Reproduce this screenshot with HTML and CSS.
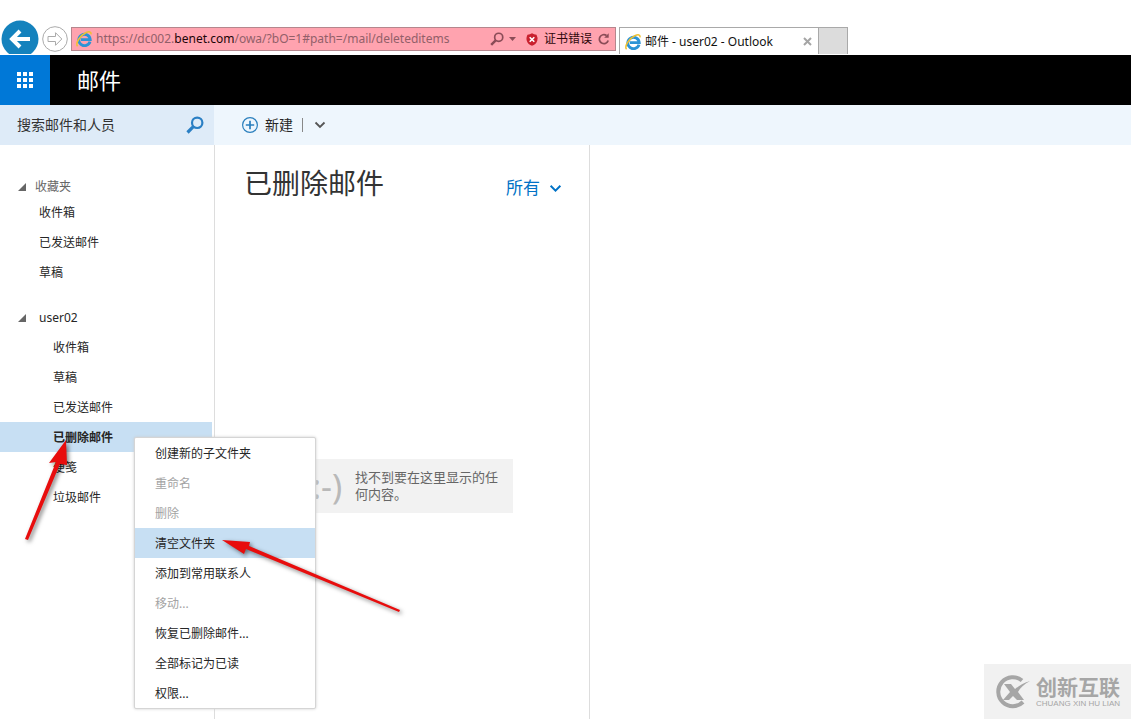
FILE: index.html
```html
<!DOCTYPE html>
<html lang="zh-CN">
<head>
<meta charset="utf-8">
<title>邮件 - user02 - Outlook</title>
<link rel="stylesheet" href="styles.css">
</head>
<body>
<svg class="defs" width="0" height="0" aria-hidden="true">
  <symbol id="ie" viewBox="0 0 16 16">
    <path d="M14 10.600A5.700 5.700 0 1 1 14.200 8.600H5" fill="none" stroke="#2b94d6" stroke-width="2.900"/>
    <path d="M1.600 15.300C-1 12.500 4 4.500 9.800 1.800c3.200-1.500 5.600-1.300 5.200 1.500" fill="none" stroke="#f0c030" stroke-width="1.500"/>
  </symbol>
  <symbol id="lens" viewBox="0 0 18 18">
    <circle cx="11.200" cy="6.800" r="5.200" fill="none" stroke="currentColor" stroke-width="2.200"/>
    <path d="M7.300 10.700 1.500 16.500" stroke="currentColor" stroke-width="3.200"/>
  </symbol>
  <symbol id="chevron" viewBox="0 0 12 8">
    <path d="M1.500 1.500 6 6l4.500-4.500" fill="none" stroke="currentColor" stroke-width="1.800"/>
  </symbol>
</svg>

<header class="browser">
  <button class="back" aria-label="后退"><svg viewBox="0 0 38 38"><circle cx="19" cy="19" r="18.500" fill="#1482bd"/><path d="M29 19H12M19 11l-8 8 8 8" fill="none" stroke="#fff" stroke-width="4"/></svg></button>
  <button class="forward" aria-label="前进"><svg viewBox="0 0 26 26"><circle cx="13" cy="13" r="12.300" fill="#fff" stroke="#aaa"/><path d="M6 10.500h7.500V6.700l6.300 6.300-6.300 6.300v-3.800H6z" fill="#fff" stroke="#aaa"/></svg></button>
  <div class="address">
    <svg class="ie"><use href="#ie"/></svg>
    <div class="url" role="textbox" aria-label="地址">https://dc002.<span class="domain">benet.com</span>/owa/?bO=1#path=/mail/deleteditems</div>
    <button class="find" aria-label="搜索"><svg class="lens-small"><use href="#lens"/></svg><svg class="drop" viewBox="0 0 7 4"><path d="M0 0h7L3.500 4z" fill="#8b4c57"/></svg></button>
    <button class="cert"><svg class="shield" viewBox="0 0 12 13"><path d="M6 .3Q8 1.500 10.500 1.800 12 4.500 11.300 7.500C10.500 10.300 8.500 12 6 12.800 3.500 12 1.500 10.300.7 7.500 0 4.500 1.500 1.800 1.500 1.800Q4 1.500 6 .3z" fill="#c9202e"/><path d="m3.700 4.200 4.600 4.600m0-4.600L3.700 8.800" stroke="#fff" stroke-width="1.600"/></svg>证书错误</button>
    <button class="reload" aria-label="刷新"><svg viewBox="0 0 12 12"><path d="M10.200 7.500A4.500 4.500 0 1 1 8.500 2.500" fill="none" stroke="#8b4c57" stroke-width="1.700"/><path d="M10.700.3v4.500H6.200z" fill="#8b4c57"/></svg></button>
  </div>
  <div class="tab">
    <svg class="ie"><use href="#ie"/></svg>
    <span class="tab-title">邮件 - user02 - Outlook</span>
    <button class="close" aria-label="关闭"><svg viewBox="0 0 9 9"><path d="m1 1 7 7m0-7L1 8" stroke="#a5a5a5" stroke-width="2"/></svg></button>
  </div>
  <button class="new-tab" aria-label="新选项卡"></button>
</header>

<div class="appbar">
  <button class="launcher" aria-label="应用"><svg viewBox="0 0 16 16" fill="#fff"><path d="M0 0h4v4H0zM6 0h4v4H6zM12 0h4v4h-4zM0 6h4v4H0zM6 6h4v4H6zM12 6h4v4h-4zM0 12h4v4H0zM6 12h4v4H6zM12 12h4v4h-4z"/></svg></button>
  <h1 class="app-name">邮件</h1>
</div>

<div class="toolbar">
  <form class="search">
    <input class="search-input" type="text" aria-label="搜索邮件和人员" placeholder="搜索邮件和人员">
    <button class="search-button" type="button" aria-label="搜索"><svg><use href="#lens"/></svg></button>
  </form>
  <div class="commands">
    <button class="create"><svg viewBox="0 0 16 16"><circle cx="8" cy="8" r="7.400" fill="none" stroke="#2a7fbd" stroke-width="1.200"/><path d="M8 3.800v8.400M3.800 8h8.400" stroke="#2a7fbd" stroke-width="1.700"/></svg>新建</button>
    <span class="divider"></span>
    <button class="more" aria-label="更多"><svg><use href="#chevron"/></svg></button>
  </div>
</div>

<main class="panes">
  <nav class="folders">
    <button class="group favorites"><svg viewBox="0 0 8 8"><path d="M8 0v8H0z" fill="#666"/></svg>收藏夹</button>
    <ul class="list">
      <li><a href="#inbox">收件箱</a></li>
      <li><a href="#sent">已发送邮件</a></li>
      <li><a href="#drafts">草稿</a></li>
    </ul>
    <button class="group account"><svg viewBox="0 0 8 8"><path d="M8 0v8H0z" fill="#666"/></svg>user02</button>
    <ul class="list nested">
      <li><a href="#inbox">收件箱</a></li>
      <li><a href="#drafts">草稿</a></li>
      <li><a href="#sent">已发送邮件</a></li>
      <li><a class="current" href="#deleted">已删除邮件</a></li>
      <li><a href="#notes">便笺</a></li>
      <li><a href="#junk">垃圾邮件</a></li>
    </ul>
  </nav>
  <section class="messages">
    <div class="heading">
      <h2>已删除邮件</h2>
      <button class="filter">所有<svg><use href="#chevron"/></svg></button>
    </div>
    <div class="empty"><span class="smile">:-)</span><p>找不到要在这里显示的任何内容。</p></div>
  </section>
  <section class="reading"></section>
</main>

<div class="menu" role="menu">
  <button role="menuitem">创建新的子文件夹</button>
  <button role="menuitem" disabled>重命名</button>
  <button role="menuitem" disabled>删除</button>
  <button role="menuitem" class="active">清空文件夹</button>
  <button role="menuitem">添加到常用联系人</button>
  <button role="menuitem" disabled>移动...</button>
  <button role="menuitem">恢复已删除邮件...</button>
  <button role="menuitem">全部标记为已读</button>
  <button role="menuitem">权限...</button>
</div>

<svg class="arrows" viewBox="0 0 420 640" aria-hidden="true">
  <path d="M66 440 49 463l7-1L25 539l3 1 32-76 7 1z"/>
  <path d="m222 540 22 14 2-5 153 63 1-2-151-64 1-4z"/>
</svg>

<div class="watermark">
  <svg viewBox="0 0 36 34"><path d="M27 5.500A14.500 14.500 0 1 0 28 27" fill="none" stroke="#a6a6a6" stroke-width="4"/><path d="M9 9h7l4 5c4-3 8-6 15-8-6 3-10 7-12 11l6 8h-7l-4-4-4 4H8l7-8z" fill="#a6a6a6"/></svg>
  <div class="brand"><strong>创新互联</strong><span>CHUANG XIN HU LIAN</span></div>
</div>
</body>
</html>
```
FILE: styles.css
```css
* { box-sizing: border-box; }
body {
  margin: 0;
  min-height: 100vh;
  display: flex;
  flex-direction: column;
  position: relative;
  background: #fff;
  color: #262626;
  font: 12px/30px "Noto Sans", "Noto Sans CJK SC", sans-serif;
}
button, input { font: inherit; color: inherit; border: 0; padding: 0; background: none; }
button { display: flex; align-items: center; text-align: left; }
svg { display: block; flex: none; }
h1, h2, p, ul { margin: 0; padding: 0; font-weight: 400; }
ul { list-style: none; }
a { color: inherit; text-decoration: none; }
.defs { position: absolute; }

.browser { display: flex; align-items: flex-start; height: 54px; margin-bottom: 1px; padding: 20px 0 0 1px; overflow: hidden; }
.back svg { width: 38px; height: 38px; }
.forward { margin: 6px 0 0 3px; }
.forward svg { width: 26px; height: 26px; }
.address {
  display: flex;
  align-items: center;
  width: 545px;
  height: 24px;
  margin: 7px 3px 0;
  padding: 0 5px 0 4px;
  background: #ffa3af;
  border: 1px solid #b5868d;
  line-height: 24px;
}
.ie { width: 16px; height: 16px; }
.url, .tab-title { flex: 1; margin-left: 4px; white-space: nowrap; }
.url { color: #925f69; }
.domain { color: #1c0508; }
.find { gap: 5px; color: #8b4c57; }
.lens-small { width: 14px; height: 14px; }
.drop { width: 7px; height: 4px; }
.cert { gap: 6px; margin: 0 6px 0 10px; color: #30080c; }
.shield { width: 12px; height: 13px; }
.reload svg { width: 12px; height: 12px; }
.tab {
  display: flex;
  align-items: center;
  width: 200px;
  height: 28px;
  margin-top: 7px;
  padding: 0 6px 0 5px;
  border: 1px solid #a9a9a9;
  border-bottom: 0;
  color: #111;
}
.close svg { width: 9px; height: 9px; }
.new-tab { width: 29px; height: 28px; margin-top: 7px; background: #dcdcdc; border: 1px solid #a9a9a9; border-left: 0; }

.appbar { display: flex; height: 50px; background: #000; color: #fff; }
.launcher { justify-content: center; width: 50px; background: #0078d7; }
.launcher svg { width: 16px; height: 16px; }
.app-name { margin-left: 27px; font-size: 22px; line-height: 50px; }

.toolbar { display: flex; height: 40px; background: #eef6fd; }
.search { display: flex; width: 214px; padding: 0 10px 0 17px; background: #deebf8; font-size: 14px; }
.search-input { flex: 1; min-width: 0; outline: 0; }
.search-input::placeholder { color: #333; opacity: 1; }
.search-button { color: #2a7fc4; }
.search-button svg { width: 18px; height: 18px; }
.commands { display: flex; align-items: center; padding-left: 28px; font-size: 14px; }
.create { gap: 7px; }
.create svg { width: 16px; height: 16px; }
.divider { width: 1px; height: 14px; margin: 0 11px 0 9px; background: #888; }
.more { color: #555; }
.more svg { width: 12px; height: 8px; }

.panes { flex: 1; display: grid; grid-template-columns: 215px 375px 1fr; }
.folders { padding-top: 29px; border-right: 1px solid #ddd; }
.group { width: 100%; padding: 2px 0 0 18px; }
.group svg { width: 8px; height: 8px; }
.favorites { gap: 9px; height: 24px; color: #666; }
.account { gap: 13px; height: 30px; margin-top: 14px; }
.list a { display: block; height: 30px; padding-left: 39px; }
.nested a { padding-left: 53px; margin-right: 2px; line-height: 32px; }
.nested .current { background: #c7dff3; font-weight: 700; }
.messages { border-right: 1px solid #ddd; padding: 13px 27px 0 29px; }
.heading { display: flex; justify-content: space-between; align-items: center; height: 50px; }
.heading h2 { font-size: 28px; line-height: 50px; color: #333; }
.filter { gap: 9px; margin-top: 10px; color: #0072c6; font-size: 17px; }
.filter svg { width: 13px; height: 9px; }
.empty { display: flex; align-items: center; height: 54px; margin: 251px 49px 0 20px; padding-left: 48px; background: #f2f2f2; color: #666; }
.smile { flex: none; width: 43px; color: #b9b9b9; font-size: 34px; line-height: 44px; }
.empty p { width: 150px; font-size: 13px; line-height: 17px; }

.menu { position: absolute; left: 134px; top: 437px; width: 182px; background: #fff; border: 1px solid #d5d5d5; border-radius: 2px; box-shadow: 0 0 3px #ccc; }
.menu button { width: 100%; height: 30px; padding: 2px 0 0 20px; }
.menu button:disabled { color: #a3a3a3; }
.menu .active { background: #c7dff3; }

.arrows { position: absolute; left: 0; top: 0; width: 420px; height: 640px; pointer-events: none; fill: #e80d0d; filter: drop-shadow(2px 2px 2px rgba(0, 0, 0, .5)); }

.watermark { position: absolute; right: 0; bottom: 0; display: flex; align-items: center; gap: 5px; width: 147px; height: 55px; padding-left: 11px; background: #f1f1f1; color: #a6a6a6; }
.watermark svg { width: 36px; height: 34px; }
.brand { display: flex; flex-direction: column; white-space: nowrap; }
.brand strong { font-size: 21px; line-height: 24px; }
.brand span { font: 8px/10px "Liberation Sans", sans-serif; }
```
